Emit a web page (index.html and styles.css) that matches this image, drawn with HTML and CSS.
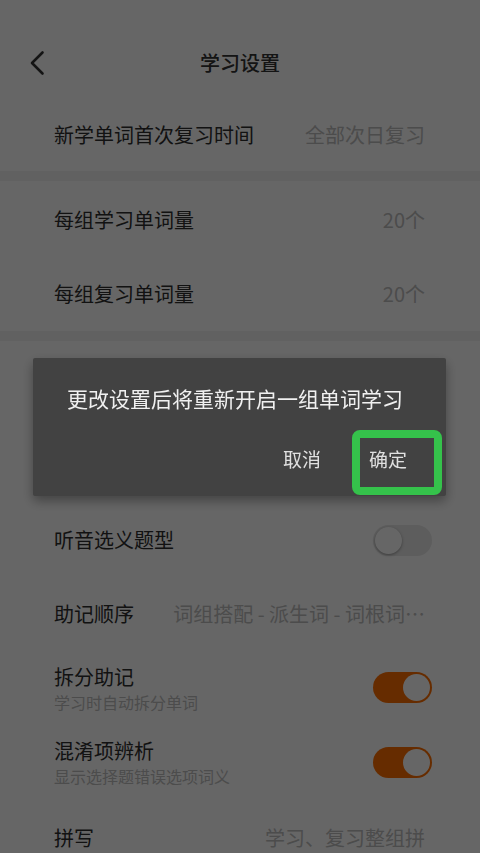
FILE: index.html
```html
<!DOCTYPE html>
<html lang="zh-CN">
<head>
<meta charset="utf-8">
<title>学习设置</title>
<link rel="stylesheet" href="styles.css">
</head>
<body>
<div class="page">
  <header class="topbar">
    <div class="back">
      <svg width="16" height="26" viewBox="0 0 16 26"><polyline points="13.5,2.5 3,13 13.5,23.5" fill="none" stroke="#333" stroke-width="2.6" stroke-linecap="round" stroke-linejoin="round"/></svg>
    </div>
    <h1 class="title">学习设置</h1>
    <div></div>
  </header>

  <section class="group g1">
    <div class="row h72"><span class="label">新学单词首次复习时间</span><span class="value">全部次日复习</span></div>
  </section>
  <div class="divider"></div>

  <section class="group g2">
    <div class="row"><span class="label">每组学习单词量</span><span class="value">20个</span></div>
    <div class="row"><span class="label">每组复习单词量</span><span class="value">20个</span></div>
  </section>
  <div class="divider"></div>

  <section class="group g3">
    <div class="row"><span class="label">听音选义题型</span><span class="switch"><i></i></span></div>
    <div class="row"><span class="label">助记顺序</span><span class="value">词组搭配 - 派生词 - 词根词…</span></div>
    <div class="row h73">
      <div class="stack"><span class="label">拆分助记</span><span class="sub">学习时自动拆分单词</span></div>
      <span class="switch on"><i></i></span>
    </div>
    <div class="row h76">
      <div class="stack"><span class="label">混淆项辨析</span><span class="sub">显示选择题错误选项词义</span></div>
      <span class="switch on"><i></i></span>
    </div>
    <div class="row h76"><span class="label">拼写</span><span class="value">学习、复习整组拼</span></div>
  </section>
</div>

<div class="mask">
  <div class="dialog">
    <p class="message">更改设置后将重新开启一组单词学习</p>
    <div class="actions">
      <button class="btn">取消</button>
      <button class="btn">确定</button>
    </div>
  </div>
</div>
<div class="highlight"></div>
</body>
</html>
```

FILE: styles.css
```css
* { box-sizing: border-box; }
html, body {
  margin: 0;
  padding: 0;
  height: 100%;
  overflow: hidden;
}
body {
  background: #ffffff;
  font-family: "Noto Sans CJK SC", "Noto Sans", sans-serif;
  color: #333333;
}
.page {
  width: 480px;
}
.topbar {
  height: 99px;
  padding-top: 43px;
  display: grid;
  grid-template-columns: 1fr auto 1fr;
  align-items: start;
}
.back {
  padding-left: 29px;
  padding-top: 7px;
  height: 40px;
}
.back svg { display: block; }
.title {
  margin: 0;
  font-size: 20px;
  font-weight: 500;
  line-height: 40px;
  color: #333333;
}
.group {
  display: flex;
  flex-direction: column;
}
.g2 { padding-top: 2px; }
.g3 { padding-top: 162px; }
.divider {
  height: 10px;
  background: #f3f3f3;
}
.row {
  height: 74px;
  display: flex;
  align-items: center;
  justify-content: space-between;
  padding: 0 48px 0 54px;
}
.row.h72 { height: 72px; }
.row.h73 { height: 73px; }
.row.h76 { height: 76px; }
.label {
  font-size: 20px;
  line-height: 26px;
  color: #2e2e2e;
  white-space: nowrap;
}
.value {
  font-size: 20px;
  line-height: 26px;
  color: #bdbdbd;
  margin-right: 7px;
  white-space: nowrap;
}
.stack {
  display: flex;
  flex-direction: column;
}
.sub {
  font-size: 16px;
  line-height: 20px;
  margin-top: 2px;
  color: #bdbdbd;
}
.switch {
  position: relative;
  width: 59px;
  height: 31px;
  border-radius: 16px;
  background: #e8e8e8;
  flex: none;
}
.switch i {
  position: absolute;
  top: 2px;
  left: 2px;
  width: 27px;
  height: 27px;
  border-radius: 50%;
  background: #ffffff;
  box-shadow: 0 1px 3px rgba(0,0,0,0.35);
}
.switch.on { background: #ff6f00; }
.switch.on i {
  left: 30px;
  box-shadow: none;
}
.mask {
  position: fixed;
  inset: 0;
  background: rgba(0,0,0,0.6);
  display: flex;
  align-items: center;
  justify-content: center;
}
.dialog {
  width: 413px;
  height: 138px;
  margin-right: 1px;
  background: #424242;
  border-radius: 2px;
  box-shadow: 0 5px 12px rgba(0,0,0,0.35);
  display: flex;
  flex-direction: column;
}
.message {
  margin: 0;
  padding: 28px 20px 0 34px;
  font-size: 21px;
  line-height: 24px;
  color: #f0f0f0;
  white-space: nowrap;
}
.actions {
  margin-top: 37px;
  display: flex;
  justify-content: flex-end;
  gap: 48px;
  padding-right: 39px;
}
.btn {
  background: none;
  border: none;
  padding: 0;
  margin: 0;
  font-family: inherit;
  font-size: 19px;
  line-height: 24px;
  color: #e0e0e0;
}
.highlight {
  position: absolute;
  left: 352px;
  top: 430px;
  width: 90px;
  height: 65px;
  border: 8px solid #35c24b;
  border-radius: 8px;
}
```
